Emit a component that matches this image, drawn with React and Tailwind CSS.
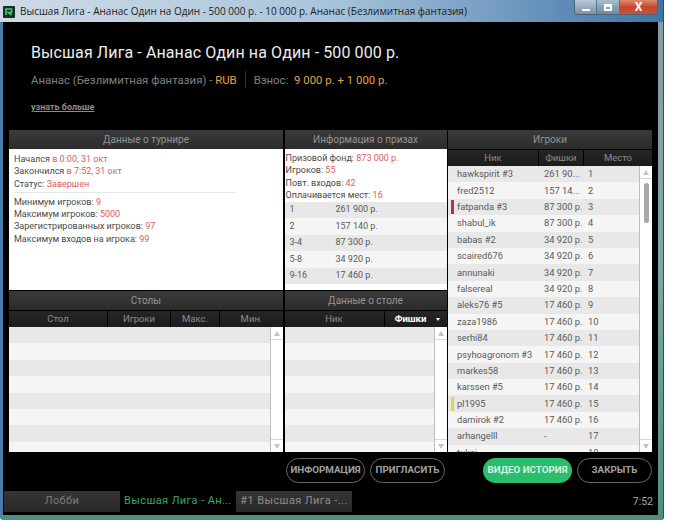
const players = [
  ["hawkspirit #3", "261 90...", "1"],
  ["fred2512", "157 14...", "2"],
  ["fatpanda #3", "87 300 р.", "3", "bg-[#b5353a]"],
  ["shabul_ik", "87 300 р.", "4"],
  ["babas #2", "34 920 р.", "5"],
  ["scaired676", "34 920 р.", "6"],
  ["annunaki", "34 920 р.", "7"],
  ["falsereal", "34 920 р.", "8"],
  ["aleks76 #5", "17 460 р.", "9"],
  ["zaza1986", "17 460 р.", "10"],
  ["serhi84", "17 460 р.", "11"],
  ["psyhoagronom #3", "17 460 р.", "12"],
  ["markes58", "17 460 р.", "13"],
  ["karssen #5", "17 460 р.", "14"],
  ["pl1995", "17 460 р.", "15", "bg-[#dcd84a]"],
  ["damirok #2", "17 460 р.", "16"],
  ["arhangelll", "-", "17"],
  ["tukai", "", "18"],
];

const prizes = [
  ["1", "261 900 р."],
  ["2", "157 140 р."],
  ["3-4", "87 300 р."],
  ["5-8", "34 920 р."],
  ["9-16", "17 460 р."],
];

function PanelHeader({ children }) {
  return (
    <div className="h-[19px] shrink-0 flex items-center justify-center bg-gradient-to-b from-[#3a3a3a] to-[#2c2c2c] text-[10px] text-[#949494]">
      {children}
    </div>
  );
}

function ColHeaders({ cols }) {
  return (
    <div className="h-[17px] shrink-0 flex bg-gradient-to-b from-[#262626] to-[#1c1c1c] border-t border-black text-[9.5px] text-[#8c8c8c]">
      {cols.map((c, i) => (
        <div key={i} className={`${c.w} flex items-center justify-center relative ${i > 0 ? "border-l border-black" : ""} ${c.active ? "text-white font-bold pr-[10px]" : ""}`}>
          {c.label}
          {c.active && <span className="absolute right-[7px] top-[7px] w-0 h-0 border-x-[2px] border-x-transparent border-t-[3px] border-t-white" />}
        </div>
      ))}
    </div>
  );
}

function Scrollbar({ thumb }) {
  return (
    <div className="w-[13px] shrink-0 flex flex-col bg-white border-l border-[#bdbdbd]">
      <div className="h-[13px] flex items-center justify-center border-b border-[#d8d8d8]">
        <div className="w-0 h-0 border-x-[3px] border-x-transparent border-b-[5px] border-b-[#c4c4c4]" />
      </div>
      <div className="flex-1 pt-[4px] flex justify-center">
        {thumb && <div className="w-[5px] h-[40px] rounded-[3px] bg-[#a8a8a8]" />}
      </div>
      <div className="h-[13px] flex items-center justify-center border-t border-[#d8d8d8]">
        <div className="w-0 h-0 border-x-[3px] border-x-transparent border-t-[5px] border-t-[#c4c4c4]" />
      </div>
    </div>
  );
}

function EmptyRows() {
  return (
    <div className="flex-1 overflow-hidden">
      {[0, 1, 2, 3, 4, 5, 6, 7].map((i) => (
        <div key={i} className={`h-[16.4px] ${i % 2 === 0 ? "bg-[#e8e8e8]" : "bg-[#f5f5f5]"}`} />
      ))}
    </div>
  );
}

function Pill({ className, children }) {
  return (
    <div className={`h-[25px] rounded-full flex items-center justify-center text-[9.8px] font-bold ${className}`}>
      {children}
    </div>
  );
}

function Tab({ className, children }) {
  return (
    <div className={`h-[21px] w-[116px] flex items-center justify-center text-[11px] tracking-[0.4px] whitespace-nowrap ${className}`}>
      {children}
    </div>
  );
}

export default function App() {
  return (
    <div className="w-[700px] h-[521px] bg-white overflow-hidden font-['Roboto',sans-serif]">
      <div className="w-[664px] h-[520px] flex flex-col rounded-b-[3px] bg-gradient-to-b from-[#8a9aa8] via-[#7fa8a4] to-[#4f8f80] border-r border-[#3a4a48]">
        {/* title bar */}
        <div className="h-[22px] shrink-0 flex justify-between bg-gradient-to-r from-[#cfdbe6] via-[#a9c4da] to-[#3f75a8]">
          <div className="flex items-center pl-[3px] gap-[5px] pt-[1px] min-w-0">
            <svg width="12" height="12" viewBox="0 0 12 12" className="shrink-0">
              <rect width="12" height="12" rx="1" fill="#14301f" />
              <path d="M3 9V3h5.5v3.5H5.5L8.5 9" fill="none" stroke="#3fc77a" strokeWidth="1.7" />
            </svg>
            <span className="text-[10px] text-[#1c1c1c] whitespace-nowrap font-['Open_Sans',sans-serif]">
              Высшая Лига - Ананас Один на Один - 500 000 р. - 10 000 р. Ананас (Безлимитная фантазия)
            </span>
          </div>
          <div className="flex h-[15px] mr-[5px] rounded-b-[4px] overflow-hidden border-x border-b border-[#4d6478]">
            <div className="w-[22px] flex items-end justify-center pb-[3px] bg-gradient-to-b from-[#b8c8d6] to-[#7d93a8] border-r border-[#5d7488]">
              <div className="w-[8px] h-[2px] bg-white" />
            </div>
            <div className="w-[23px] flex items-center justify-center bg-gradient-to-b from-[#a8bccc] to-[#6f88a0] border-r border-[#5d7488]">
              <div className="w-[8px] h-[7px] border-2 border-white border-t-[3px]" />
            </div>
            <div className="w-[37px] flex items-center justify-center bg-gradient-to-b from-[#dc8a72] via-[#c9452f] to-[#c9523a] text-white text-[12px] font-bold leading-none">
              X
            </div>
          </div>
        </div>

        {/* window body */}
        <div className="flex-1 min-h-0 flex flex-col border-l-[3px] border-l-[#4a7cab] mr-[5px] mb-[5px] bg-black">
          <div className="h-[108px] shrink-0 pl-[28px] pt-[21px]">
            <div className="text-[16px] leading-[20px] text-[#ececec] tracking-[0.1px] whitespace-nowrap">
              Высшая Лига - Ананас Один на Один - 500 000 р.
            </div>
            <div className="mt-[8px] flex items-center text-[11.4px] leading-[14px] text-[#808080] whitespace-nowrap">
              <span>Ананас (Безлимитная фантазия) -&nbsp;</span>
              <span className="text-[#e6a33e]">RUB</span>
              <span className="mx-[8px] w-px h-[17px] bg-[#333333]" />
              <span>Взнос:&nbsp;</span>
              <span className="text-[#e6a33e]">&nbsp;9 000 р. + 1 000 р.</span>
            </div>
            <div className="mt-[14px] text-[9px] leading-[11px] font-bold text-[#8c8c8c] underline">узнать больше</div>
          </div>

          {/* panels */}
          <div className="ml-[6px] grid grid-cols-[274px_162px_204px] grid-rows-[160px_161px] gap-x-[1.5px] gap-y-px">
            <div className="flex flex-col min-h-0">
              <PanelHeader>Данные о турнире</PanelHeader>
              <div className="flex-1 bg-white pl-[5px] pt-[4px] text-[9px] leading-[12.3px] text-[#4a4a4a]">
                <div>Начался <span className="text-[#d9605c]">в 0:00, 31 окт</span></div>
                <div>Закончился <span className="text-[#d9605c]">в 7:52, 31 окт</span></div>
                <div>Статус: <span className="text-[#d9605c]">Завершен</span></div>
                <div className="h-px w-[221px] bg-[#e6e6e6] my-[2.5px]" />
                <div>Минимум игроков: <span className="text-[#d9605c]">9</span></div>
                <div>Максимум игроков: <span className="text-[#d9605c]">5000</span></div>
                <div>Зарегистрированных игроков: <span className="text-[#d9605c]">97</span></div>
                <div>Максимум входов на игрока: <span className="text-[#d9605c]">99</span></div>
              </div>
            </div>

            <div className="flex flex-col min-h-0">
              <PanelHeader>Информация о призах</PanelHeader>
              <div className="flex-1 bg-white flex flex-col">
                <div className="pl-px pt-[3px] h-[53px] text-[9px] leading-[12.3px] text-[#4a4a4a]">
                  <div>Призовой фонд: <span className="text-[#d9605c]">873 000 р.</span></div>
                  <div>Игроков: <span className="text-[#d9605c]">55</span></div>
                  <div>Повт. входов: <span className="text-[#d9605c]">42</span></div>
                  <div>Оплачивается мест: <span className="text-[#d9605c]">16</span></div>
                </div>
                {prizes.map((p, i) => (
                  <div key={p[0]} className={`h-[16.4px] flex items-center text-[9px] text-[#5a5a5a] ${i % 2 === 0 ? "bg-[#e8e8e8]" : "bg-[#f5f5f5]"}`}>
                    <span className="w-[51px] pl-[5px]">{p[0]}</span>
                    <span>{p[1]}</span>
                  </div>
                ))}
              </div>
            </div>

            <div className="row-span-2 flex flex-col min-h-0">
              <PanelHeader>Игроки</PanelHeader>
              <ColHeaders cols={[{ label: "Ник", w: "w-[90px]" }, { label: "Фишки", w: "w-[45px]" }, { label: "Место", w: "flex-1" }]} />
              <div className="flex-1 min-h-0 flex bg-white">
                <div className="flex-1 overflow-hidden">
                  {players.map((p, i) => (
                    <div key={p[0]} className={`h-[16.4px] flex items-center text-[9.3px] text-[#5a5a5a] ${i % 2 === 0 ? "bg-[#e8e8e8]" : "bg-[#f5f5f5]"}`}>
                      <span className={`ml-[3px] w-[3px] h-[14px] ${p[3] || ""}`} />
                      <span className="w-[90px] pl-[3px] whitespace-nowrap">{p[0]}</span>
                      <span className="w-[44px] whitespace-nowrap">{p[1]}</span>
                      <span>{p[2]}</span>
                    </div>
                  ))}
                </div>
                <Scrollbar thumb />
              </div>
            </div>

            <div className="flex flex-col min-h-0">
              <PanelHeader>Столы</PanelHeader>
              <ColHeaders cols={[{ label: "Стол", w: "w-[98px]" }, { label: "Игроки", w: "w-[63px]" }, { label: "Макс.", w: "w-[49px]" }, { label: "Мин.", w: "flex-1" }]} />
              <div className="flex-1 min-h-0 flex">
                <EmptyRows />
                <Scrollbar />
              </div>
            </div>

            <div className="flex flex-col min-h-0">
              <PanelHeader>Данные о столе</PanelHeader>
              <ColHeaders cols={[{ label: "Ник", w: "w-[99px]" }, { label: "Фишки", w: "flex-1", active: true }]} />
              <div className="flex-1 min-h-0 flex">
                <EmptyRows />
                <Scrollbar />
              </div>
            </div>
          </div>

          {/* buttons */}
          <div className="mt-[6px] ml-[283px] flex">
            <Pill className="w-[79px] border border-[#666666] text-[#a0a0a0]">ИНФОРМАЦИЯ</Pill>
            <Pill className="ml-[5px] w-[75px] border border-[#666666] text-[#a0a0a0]">ПРИГЛАСИТЬ</Pill>
            <Pill className="ml-[38px] w-[89px] bg-[#2bbd6e] text-[#d5f3e2]">ВИДЕО ИСТОРИЯ</Pill>
            <Pill className="ml-[5px] w-[75px] border border-[#666666] text-[#a0a0a0]">ЗАКРЫТЬ</Pill>
          </div>

          {/* tabs */}
          <div className="mt-[8px] pl-px flex items-center">
            <Tab className="bg-gradient-to-b from-[#353535] to-[#2a2a2a] text-[#7a7a7a]">Лобби</Tab>
            <Tab className="bg-black text-[#35a866]">Высшая Лига - Ан...</Tab>
            <Tab className="bg-gradient-to-b from-[#353535] to-[#2a2a2a] text-[#8c8c8c]">#1 Высшая Лига -...</Tab>
            <span className="ml-auto mr-[5px] text-[10.5px] text-[#a8a8a8]">7:52</span>
          </div>
        </div>
      </div>
    </div>
  );
}
